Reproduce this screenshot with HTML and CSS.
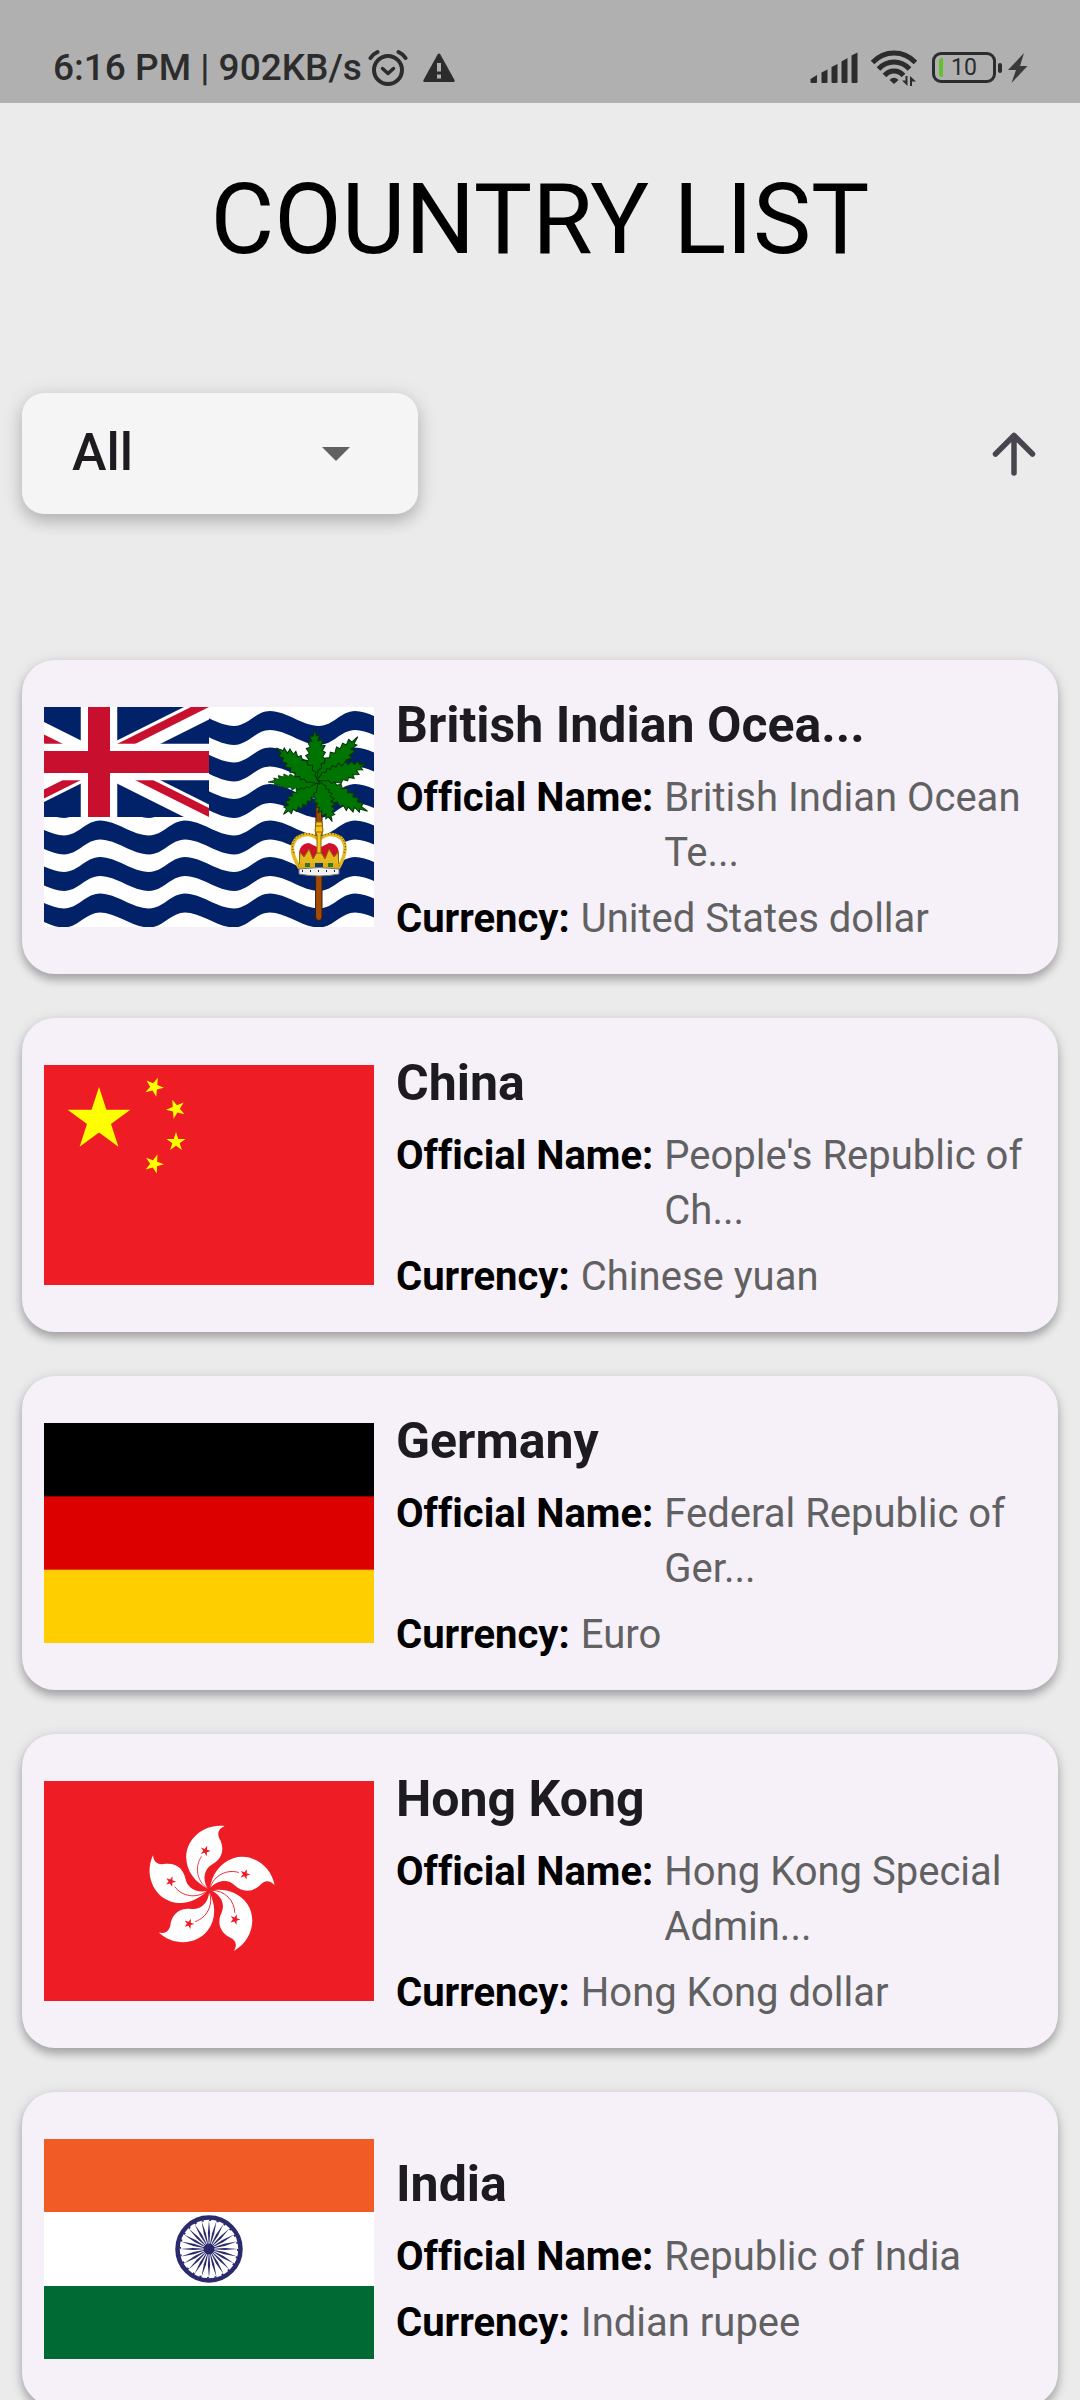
FILE: index.html
```html
<!DOCTYPE html>
<html lang="en">
<head>
<meta charset="utf-8">
<meta name="viewport" content="width=device-width, initial-scale=1">
<title>Country List</title>
<link rel="stylesheet" href="styles.css">
</head>
<body>
<div class="app">
  <div class="status">
    <div class="status-group">
      <span class="status-text">6:16 PM | 902KB/s</span>
      <svg class="icon-alarm" viewBox="0 0 40 38" width="40" height="38" fill="none" stroke="#2c2c2c" stroke-linecap="round" aria-hidden="true">
        <circle cx="20" cy="21" r="14" stroke-width="4"/>
        <path d="M14.500 19.500L20 24.500L25.500 19.500" stroke-width="3.500" stroke-linejoin="round"/>
        <path d="M2.500 9Q5 5 9.500 3M37.500 9Q35 5 30.500 3" stroke-width="4"/>
      </svg>
      <svg class="icon-warn" viewBox="0 0 32 30" width="32" height="30" aria-hidden="true">
        <path d="M16 0.500Q16.800 0.500 17.400 1.500L31.500 27Q32.200 29 30.500 29H1.500Q-0.200 29 0.500 27L14.600 1.500Q15.200 0.500 16 0.500Z" fill="#2c2c2c"/>
        <path d="M14 10H18V18.500H14ZM14 21.500H18V25.500H14Z" fill="#b0b0b0"/>
      </svg>
    </div>
    <div class="status-group status-right">
      <svg viewBox="0 0 48 32" width="48" height="32" fill="#2c2c2c" aria-hidden="true">
        <path d="M0.500 27L7 23V30Q7 31 6 31H1.500Q0.500 31 0.500 30Z"/>
        <path d="M11.500 20.500L17.500 17.500V30Q17.500 31 16.500 31H12.500Q11.500 31 11.500 30Z"/>
        <path d="M21.500 15L27.500 12V30Q27.500 31 26.500 31H22.500Q21.500 31 21.500 30Z"/>
        <path d="M31.500 9.500L37.500 6V30Q37.500 31 36.500 31H32.500Q31.500 31 31.500 30Z"/>
        <path d="M41.500 3.500L47.500 0.500V30Q47.500 31 46.500 31H42.500Q41.500 31 41.500 30Z"/>
      </svg>
      <svg class="icon-wifi" viewBox="0 0 46 36" width="46" height="36" fill="none" stroke="#2c2c2c" stroke-width="5" aria-hidden="true">
        <path d="M1.500 12.500Q10.500 3 23 3T44.500 12.500"/>
        <path d="M7.500 19Q14 12 23 12T38.500 19"/>
        <path d="M13.500 25.500Q17.500 21 23 21T32.500 25.500"/>
        <path d="M18.500 30Q23 25.500 27.500 30L23 34Z" fill="#2c2c2c" stroke="none"/>
        <path d="M36.500 26V36L31 30.500H34.500V26ZM39 36V26L45 31.500H41V36Z" fill="#2c2c2c" stroke="none"/>
      </svg>
      <div class="battery">
        <span class="battery-level"></span>
        <span class="battery-text">10</span>
      </div>
      <span class="battery-cap"></span>
      <svg class="icon-bolt" viewBox="0 0 20 30" width="20" height="30" aria-hidden="true"><path d="M16 0L0 17H8L3.500 30L19.500 13H12Z" fill="#3a3a3a"/></svg>
    </div>
  </div>

  <h1 class="title">COUNTRY LIST</h1>

  <div class="toolbar">
    <div class="picker">
      <select class="picker-select" aria-label="Filter countries">
        <option>All</option>
      </select>
      <svg class="picker-arrow" viewBox="0 0 28 14" width="28" height="14" aria-hidden="true"><path d="M0 0H28L14 14Z" fill="#616161"/></svg>
    </div>
    <button class="sort" type="button" aria-label="Sort ascending">
      <svg viewBox="0 0 44 44" width="44" height="44" fill="none" stroke="#49454f" stroke-width="5.500" stroke-linecap="round" stroke-linejoin="round" aria-hidden="true"><path d="M22 41V3.500M3.500 22L22 3.500L40.500 22"/></svg>
    </button>
  </div>

  <main class="list">
    <article class="card">
      <svg class="flag" viewBox="0 0 330 220" role="img" aria-label="Flag of the British Indian Ocean Territory">
        <defs>
          <path id="wave" d="M-65 19c14 0 22-15 36-15c16 0 33 15 49 15c14 0 22-15 36-15c16 0 33 15 49 15c14 0 22-15 36-15c16 0 33 15 49 15c14 0 22-15 36-15c16 0 33 15 49 15c14 0 22-15 36-15c16 0 33 15 49 15v19c-16 0-33-15-49-15c-14 0-22 15-36 15c-16 0-33-15-49-15c-14 0-22 15-36 15c-16 0-33-15-49-15c-14 0-22 15-36 15c-16 0-33-15-49-15c-14 0-22 15-36 15c-16 0-33-15-49-15c-14 0-22 15-36 15z"/>
          <path id="leaf" d="M0 3L-5-6L-7-8L-6-12L-9-14L-7-17L-10-20L-7-23L-10-27L-6-29L-9-34L-5-35L-7-40L-3-41L-5-46L-1-46L0-53L2-46L5-47L3-41L8-42L6-36L10-36L7-31L10-29L7-25L10-22L7-18L10-14L6-11L7-7L4-6Z" fill="#007400" stroke="#06330a" stroke-width="1"/>
        </defs>
        <rect width="330" height="220" fill="#fff"/>
        <g fill="#012169">
          <use href="#wave"/><use href="#wave" y="36.500"/><use href="#wave" y="73"/><use href="#wave" y="109.500"/><use href="#wave" y="146"/><use href="#wave" y="182.500"/>
        </g>
        <svg width="165" height="110" viewBox="0 0 165 110">
          <rect width="165" height="110" fill="#012169"/>
          <path d="M-55 0L165 110M-55 110L165 0" stroke="#fff" stroke-width="22.400"/>
          <path d="M55 55L165 0H147L55 46ZM55 55L165 110V101L55 46ZM55 55L0 27.500V36.500L55 64ZM55 55L0 82.500V91.500L55 64Z" fill="#c8102e"/>
          <path d="M55 0V110M0 55H165" stroke="#fff" stroke-width="36.500"/>
          <path d="M55 0V110M0 55H165" stroke="#c8102e" stroke-width="22"/>
        </svg>
        <path d="M272 96H278V210Q278 213.500 275 213.500T271.500 210Z" fill="#a24a08" stroke="#3c1c04" stroke-width="1"/>
        <g transform="translate(273 75)">
          <use href="#leaf" transform="rotate(-3)"/>
          <use href="#leaf" transform="rotate(42) scale(1 1.150)"/>
          <use href="#leaf" transform="rotate(69)"/>
          <use href="#leaf" transform="rotate(120) scale(1 1.100)"/>
          <use href="#leaf" transform="rotate(159) scale(1 .800)"/>
          <use href="#leaf" transform="rotate(226) scale(1 .880)"/>
          <use href="#leaf" transform="rotate(270) scale(.800 .920)"/>
          <use href="#leaf" transform="rotate(310)"/>
        </g>
        <path d="M255 160Q243 140 253 131Q265 123 275 133Q285 123 297 131Q306 140 295 160Z" fill="#fff" stroke="#e6b81e" stroke-width="3.500"/>
        <path d="M250 146Q246 137 253 130Q262 124 272 129M300 146Q304 137 297 130Q288 124 278 129" fill="none" stroke="#222" stroke-width="1" stroke-dasharray="1 2"/>
        <path d="M256 155Q252 137 265 136L275 141L285 136Q298 137 294 155Z" fill="#d1102c"/>
        <path d="M255 160L256 145L260 150L265 142L269 152L275 142L281 152L285 142L290 150L294 145L295 160Z" fill="#e6b81e" stroke="#8a6407" stroke-width="1"/>
        <path d="M272 115H278L279 124L277 128V146H273V128L271 124Z" fill="#f5c51c" stroke="#8a6407" stroke-width="1"/>
        <path d="M271 119H279M271 125H279" stroke="#8a6407" stroke-width="1"/>
        <path d="M255 157Q275 154 295 157V163H255Z" fill="#e0ac14"/>
        <path d="M271 156H279V160H271Z" fill="#123a66"/><path d="M261 156H266V160H261ZM284 156H289V160H284Z" fill="#2b7a2b"/>
        <path d="M255 162Q275 159 295 162V167Q275 171 255 167Z" fill="#f2f2f2" stroke="#777" stroke-width="1"/>
        <path d="M258 164H292" stroke="#222" stroke-width="2" stroke-dasharray="1 7"/>
      </svg>
      <div class="info">
        <h2 class="name">British Indian Ocea...</h2>
        <dl class="facts">
          <div class="fact"><dt>Official Name:</dt><dd>British Indian Ocean Te...</dd></div>
          <div class="fact"><dt>Currency:</dt><dd>United States dollar</dd></div>
        </dl>
      </div>
    </article>

    <article class="card">
      <svg class="flag" viewBox="0 0 330 220" role="img" aria-label="Flag of China">
        <defs><path id="star" d="M0-10L2.245-3.090L9.511-3.090L3.633 1.180L5.878 8.090L0 3.820L-5.878 8.090L-3.633 1.180L-9.511-3.090L-2.245-3.090Z"/></defs>
        <rect width="330" height="220" fill="#ee1c25"/>
        <g fill="#ff0">
          <use href="#star" transform="translate(55 55) scale(3.300)"/>
          <use href="#star" transform="translate(110 22) rotate(23)"/>
          <use href="#star" transform="translate(132 44) rotate(50)"/>
          <use href="#star" transform="translate(132 77)"/>
          <use href="#star" transform="translate(110 99) rotate(20)"/>
        </g>
      </svg>
      <div class="info">
        <h2 class="name">China</h2>
        <dl class="facts">
          <div class="fact"><dt>Official Name:</dt><dd>People's Republic of Ch...</dd></div>
          <div class="fact"><dt>Currency:</dt><dd>Chinese yuan</dd></div>
        </dl>
      </div>
    </article>

    <article class="card">
      <svg class="flag" viewBox="0 0 330 220" role="img" aria-label="Flag of Germany">
        <rect width="330" height="220" fill="#ffce00"/>
        <rect width="330" height="146.667" fill="#d00"/>
        <rect width="330" height="73.333" fill="#000"/>
      </svg>
      <div class="info">
        <h2 class="name">Germany</h2>
        <dl class="facts">
          <div class="fact"><dt>Official Name:</dt><dd>Federal Republic of Ger...</dd></div>
          <div class="fact"><dt>Currency:</dt><dd>Euro</dd></div>
        </dl>
      </div>
    </article>

    <article class="card">
      <svg class="flag" viewBox="0 0 330 220" role="img" aria-label="Flag of Hong Kong">
        <defs>
          <g id="petal">
            <path d="M-4-4C-40-22-67-55-67-97C-67-150-15-196 46-188C22-178 25-160 34-145C48-112 32-88 10-76C-12-64-22-36-4-4Z" fill="#fff"/>
            <path d="M-22-99C-42-70-38-28-4-4" fill="none" stroke="#ee1c25" stroke-width="2.500"/>
            <use href="#star" transform="translate(-11 -115) rotate(20) scale(1.600)" fill="#ee1c25"/>
          </g>
        </defs>
        <rect width="330" height="220" fill="#ee1c25"/>
        <g transform="translate(165 109) scale(.340)">
          <use href="#petal"/>
          <use href="#petal" transform="rotate(72)"/>
          <use href="#petal" transform="rotate(144)"/>
          <use href="#petal" transform="rotate(216)"/>
          <use href="#petal" transform="rotate(288)"/>
        </g>
      </svg>
      <div class="info">
        <h2 class="name">Hong Kong</h2>
        <dl class="facts">
          <div class="fact"><dt>Official Name:</dt><dd>Hong Kong Special Admin...</dd></div>
          <div class="fact"><dt>Currency:</dt><dd>Hong Kong dollar</dd></div>
        </dl>
      </div>
    </article>

    <article class="card">
      <svg class="flag" viewBox="0 0 330 220" role="img" aria-label="Flag of India">
        <defs>
          <path id="spoke" d="M0 0L-1.100-16L0-29L1.100-16Z"/>
          <g id="spokes">
            <use href="#spoke"/><use href="#spoke" transform="rotate(15)"/><use href="#spoke" transform="rotate(30)"/>
            <use href="#spoke" transform="rotate(45)"/><use href="#spoke" transform="rotate(60)"/><use href="#spoke" transform="rotate(75)"/>
          </g>
        </defs>
        <rect width="330" height="220" fill="#fff"/>
        <rect width="330" height="73" fill="#f15b25"/>
        <rect y="147" width="330" height="73" fill="#006a34"/>
        <g transform="translate(165 110)" fill="#2b2a6c">
          <circle r="31.500" fill="none" stroke="#2b2a6c" stroke-width="4.500"/>
          <circle r="28.800" fill="none" stroke="#2b2a6c" stroke-width="1.500" stroke-dasharray="2 5.540"/>
          <circle r="5.500"/>
          <use href="#spokes"/><use href="#spokes" transform="rotate(90)"/><use href="#spokes" transform="rotate(180)"/><use href="#spokes" transform="rotate(270)"/>
        </g>
      </svg>
      <div class="info">
        <h2 class="name">India</h2>
        <dl class="facts">
          <div class="fact"><dt>Official Name:</dt><dd>Republic of India</dd></div>
          <div class="fact"><dt>Currency:</dt><dd>Indian rupee</dd></div>
        </dl>
      </div>
    </article>
  </main>
</div>
</body>
</html>
```
FILE: styles.css
```css
* { box-sizing: border-box; }

body {
  margin: 0;
  background: #ebebeb;
  font-family: Roboto, "Liberation Sans", sans-serif;
  font-variant-ligatures: none;
  color: #1d1b20;
}

.app {
  display: flex;
  flex-direction: column;
  height: 100vh;
}

.status {
  display: flex;
  flex: none;
  justify-content: space-between;
  align-items: center;
  height: 103px;
  padding: 32px 52px 0 53px;
  background: #b0b0b0;
  color: #2c2c2c;
}
.status-group { display: flex; align-items: center; }
.status-text { font-size: 37px; line-height: 42px; font-weight: 500; }
.icon-alarm { margin-left: 6px; }
.icon-warn { margin-left: 15px; }
.icon-wifi { margin-left: 13px; }
.icon-bolt { margin-left: 6px; }

.battery {
  display: flex;
  align-items: center;
  width: 64px;
  height: 31px;
  margin-left: 15px;
  padding-left: 4px;
  border: 3px solid #2c2c2c;
  border-radius: 9px;
}
.battery-level {
  width: 4px;
  height: 19px;
  border-radius: 3px 0 0 3px;
  background: #64bf2d;
}
.battery-text {
  flex: 1;
  padding-right: 8px;
  font-size: 23px;
  line-height: 24px;
  text-align: center;
}
.battery-cap {
  width: 4px;
  height: 10px;
  margin-left: 2px;
  border-radius: 2px;
  background: #2c2c2c;
}

.title {
  flex: none;
  margin: 0;
  padding: 61px 22px 117px;
  font-size: 98px;
  line-height: 112px;
  font-weight: 400;
  text-align: center;
  color: #000;
}

.toolbar {
  display: flex;
  flex: none;
  justify-content: space-between;
  align-items: center;
  padding: 0 22px;
}
.picker {
  display: grid;
  align-items: center;
  width: 396px;
}
.picker-select {
  grid-area: 1 / 1;
  width: 100%;
  height: 121px;
  padding: 0 100px 3px 50px;
  border: 0;
  border-radius: 22px;
  background: #f5f5f5;
  box-shadow: 0 8px 16px rgba(0, 0, 0, .18), 0 2px 22px rgba(0, 0, 0, .1);
  appearance: none;
  font: 500 52px Roboto, "Liberation Sans", sans-serif;
  color: #1d1b20;
}
.picker-arrow {
  grid-area: 1 / 1;
  justify-self: end;
  margin-right: 68px;
  pointer-events: none;
}
.sort {
  display: flex;
  padding: 22px;
  border: 0;
  background: none;
}

.list {
  display: flex;
  flex: 1;
  flex-direction: column;
  gap: 44px;
  min-height: 0;
  padding: 146px 22px 0;
  overflow-y: auto;
  scrollbar-width: none;
}
.card {
  display: flex;
  flex: none;
  align-items: center;
  gap: 22px;
  min-height: 314px;
  padding: 22px;
  border-radius: 33px;
  background: #f6f1f9;
  box-shadow: 0 6px 9px rgba(0, 0, 0, .24), 0 2px 14px rgba(0, 0, 0, .12);
}
.flag { flex: none; width: 330px; height: 220px; overflow: hidden; }
.info { flex: 1; min-width: 0; }
.name {
  margin: 0 0 9px;
  font-size: 50px;
  line-height: 72px;
  font-weight: 700;
}
.facts {
  display: grid;
  gap: 11px;
  margin: 0;
  font-size: 40px;
  line-height: 55px;
}
.fact { display: flex; gap: 11px; }
.fact dt { flex: none; font-weight: 700; color: #000; }
.fact dd { margin: 0; color: #616161; }
```
